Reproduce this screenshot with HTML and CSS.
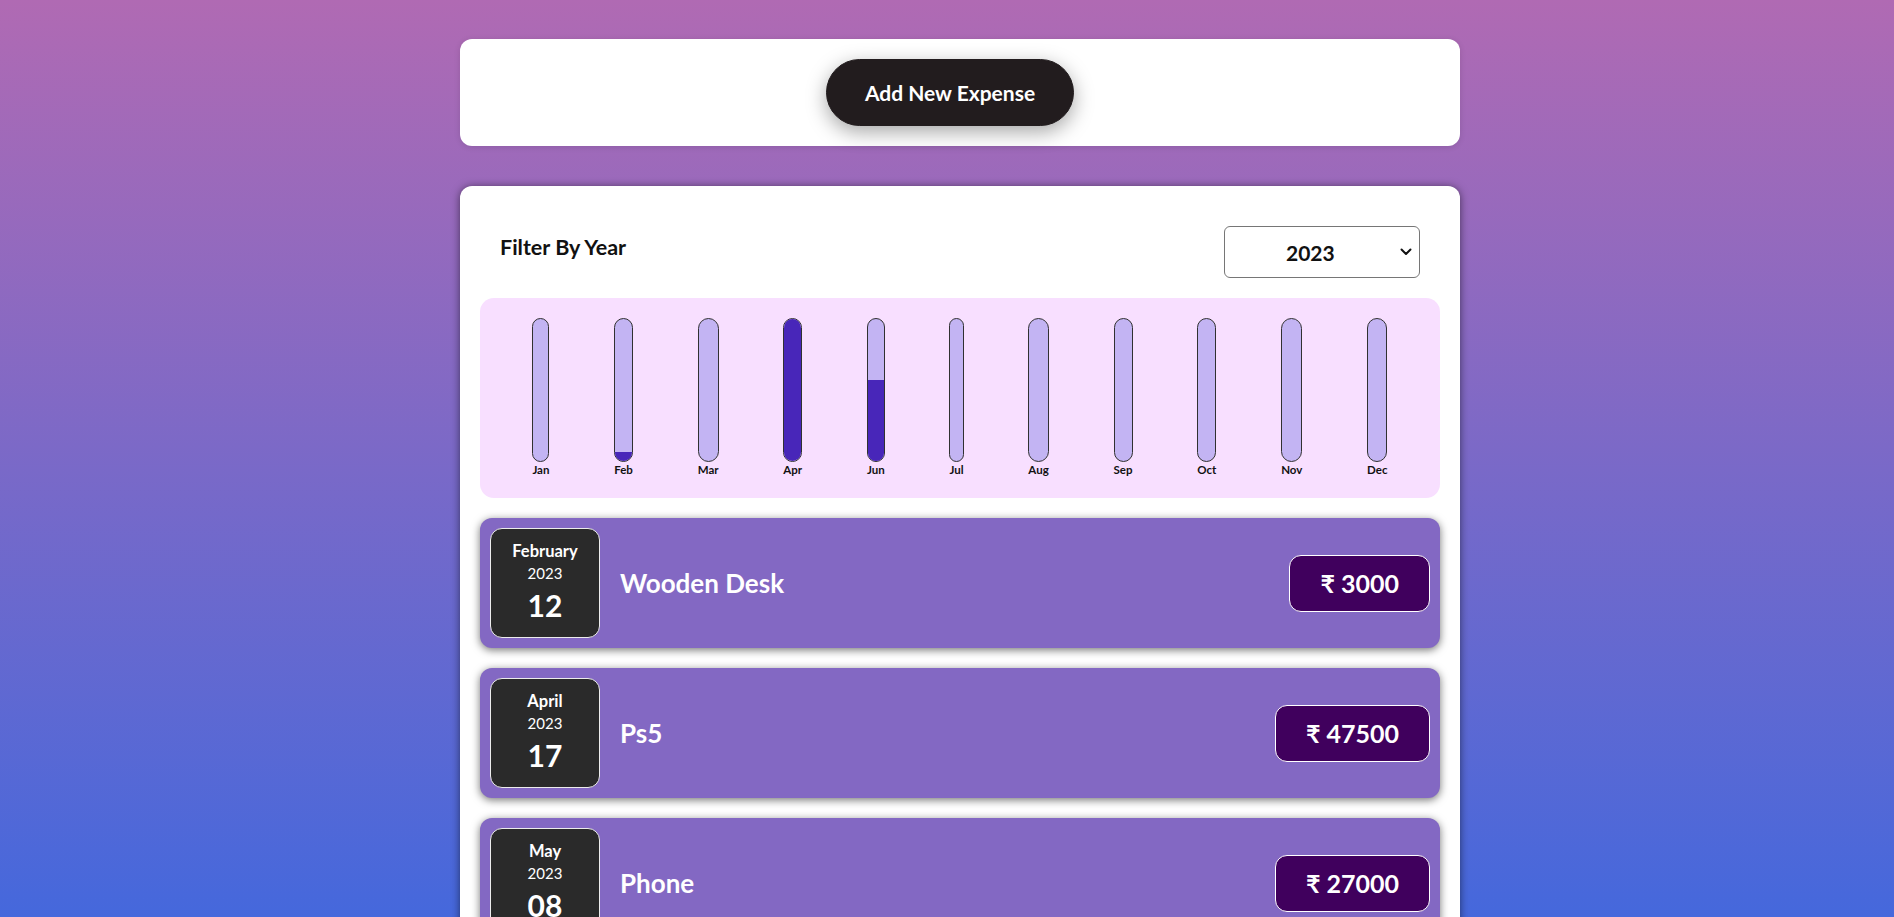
FILE: index.html
```html
<!DOCTYPE html>
<html lang="en">
<head>
<meta charset="utf-8">
<title>Expense Tracker</title>
<link rel="stylesheet" href="styles.css">
</head>
<body>
<div class="app">
  <div class="new-expense">
    <button class="new-expense__btn" type="button">Add New Expense</button>
  </div>

  <div class="expenses">
    <div class="filter">
      <label class="filter__label" for="year">Filter By Year</label>
      <div class="filter__select-wrap">
        <select id="year" class="filter__select">
          <option>2023</option>
          <option>2022</option>
          <option>2021</option>
          <option>2020</option>
        </select>
        <svg class="filter__chevron" viewBox="0 0 12 8" width="12" height="8" aria-hidden="true"><path d="M1.5 1.5 L6 6 L10.5 1.5" fill="none" stroke="#111" stroke-width="2" stroke-linecap="round" stroke-linejoin="round"/></svg>
      </div>
    </div>

    <div class="chart">
      <div class="chart-bar"><div class="chart-bar__inner"><div class="chart-bar__fill" style="height:0%"></div></div><div class="chart-bar__label">Jan</div></div>
      <div class="chart-bar"><div class="chart-bar__inner"><div class="chart-bar__fill" style="height:6.3%"></div></div><div class="chart-bar__label">Feb</div></div>
      <div class="chart-bar"><div class="chart-bar__inner"><div class="chart-bar__fill" style="height:0%"></div></div><div class="chart-bar__label">Mar</div></div>
      <div class="chart-bar"><div class="chart-bar__inner"><div class="chart-bar__fill" style="height:100%"></div></div><div class="chart-bar__label">Apr</div></div>
      <div class="chart-bar"><div class="chart-bar__inner"><div class="chart-bar__fill" style="height:56.8%"></div></div><div class="chart-bar__label">Jun</div></div>
      <div class="chart-bar"><div class="chart-bar__inner"><div class="chart-bar__fill" style="height:0%"></div></div><div class="chart-bar__label">Jul</div></div>
      <div class="chart-bar"><div class="chart-bar__inner"><div class="chart-bar__fill" style="height:0%"></div></div><div class="chart-bar__label">Aug</div></div>
      <div class="chart-bar"><div class="chart-bar__inner"><div class="chart-bar__fill" style="height:0%"></div></div><div class="chart-bar__label">Sep</div></div>
      <div class="chart-bar"><div class="chart-bar__inner"><div class="chart-bar__fill" style="height:0%"></div></div><div class="chart-bar__label">Oct</div></div>
      <div class="chart-bar"><div class="chart-bar__inner"><div class="chart-bar__fill" style="height:0%"></div></div><div class="chart-bar__label">Nov</div></div>
      <div class="chart-bar"><div class="chart-bar__inner"><div class="chart-bar__fill" style="height:0%"></div></div><div class="chart-bar__label">Dec</div></div>
    </div>

    <ul class="expenses-list">
      <li class="expense-item">
        <div class="expense-date">
          <div class="expense-date__month">February</div>
          <div class="expense-date__year">2023</div>
          <div class="expense-date__day">12</div>
        </div>
        <h2 class="expense-item__title">Wooden Desk</h2>
        <div class="expense-item__price">₹ 3000</div>
      </li>
      <li class="expense-item">
        <div class="expense-date">
          <div class="expense-date__month">April</div>
          <div class="expense-date__year">2023</div>
          <div class="expense-date__day">17</div>
        </div>
        <h2 class="expense-item__title">Ps5</h2>
        <div class="expense-item__price">₹ 47500</div>
      </li>
      <li class="expense-item">
        <div class="expense-date">
          <div class="expense-date__month">May</div>
          <div class="expense-date__year">2023</div>
          <div class="expense-date__day">08</div>
        </div>
        <h2 class="expense-item__title">Phone</h2>
        <div class="expense-item__price">₹ 27000</div>
      </li>
    </ul>
  </div>
</div>
</body>
</html>
```

FILE: styles.css
```css
* {
  box-sizing: border-box;
}

html {
  background: linear-gradient(to bottom, #b06ab3, #4568dc) fixed;
  min-height: 100%;
}

body {
  margin: 0;
  padding-left: 26px;
  font-family: Lato, "Noto Sans", sans-serif;
}

.app {
  width: 1000px;
  margin: 0 auto;
  padding: 39px 0 40px;
}

/* ---------- new expense card ---------- */
.new-expense {
  background: #fff;
  border-radius: 12px;
  padding: 20px;
  text-align: center;
  box-shadow: 0 1px 6px rgba(0, 0, 0, 0.12);
}

.new-expense__btn {
  font: inherit;
  font-size: 21px;
  font-weight: 700;
  line-height: 25px;
  color: #fff;
  background: #221c1e;
  border: 1px solid #221c1e;
  border-radius: 34px;
  padding: 20px 0;
  margin-right: 20px;
  width: 248px;
  cursor: pointer;
  box-shadow: 0 6px 20px rgba(0, 0, 0, 0.35);
}

/* ---------- expenses card ---------- */
.expenses {
  margin-top: 40px;
  background: #fff;
  border-radius: 12px;
  padding: 20px;
  box-shadow: 0 1px 8px rgba(0, 0, 0, 0.55);
}

.filter {
  display: flex;
  align-items: center;
  justify-content: space-between;
  margin: 20px 0;
  padding: 0 20px;
}

.filter__label {
  font-size: 21.5px;
  font-weight: 700;
  color: #111;
  margin-bottom: 10px;
}

.filter__select-wrap {
  position: relative;
  width: 196px;
  height: 52px;
}

.filter__select {
  appearance: none;
  -webkit-appearance: none;
  width: 100%;
  height: 100%;
  font: inherit;
  font-size: 21px;
  font-weight: 700;
  color: #111;
  background: #fff;
  border: 1px solid #767676;
  border-radius: 6px;
  padding: 0 0 0 61px;
}

.filter__chevron {
  position: absolute;
  right: 8px;
  top: 22px;
  pointer-events: none;
}

/* ---------- chart ---------- */
.chart {
  display: flex;
  justify-content: space-around;
  height: 200px;
  padding: 20px;
  border-radius: 14px;
  background: #f8dfff;
}

.chart-bar {
  display: flex;
  flex-direction: column;
  align-items: center;
}

.chart-bar__inner {
  width: 100%;
  height: 144px;
  border: 1px solid #313131;
  border-radius: 12px;
  background: #c3b4f3;
  overflow: hidden;
  display: flex;
  flex-direction: column;
  justify-content: flex-end;
}

.chart-bar__fill {
  width: 100%;
  background: #4826b9;
}

.chart-bar__label {
  font-size: 11.5px;
  font-weight: 700;
  line-height: 16px;
  color: #111;
}

/* ---------- list ---------- */
.expenses-list {
  list-style: none;
  margin: 0;
  padding: 0;
}

.expense-item {
  display: flex;
  align-items: center;
  margin-top: 20px;
  padding: 10px;
  border-radius: 12px;
  background: #8368c3;
  box-shadow: 0 2px 8px rgba(0, 0, 0, 0.55);
}

.expense-date {
  flex: none;
  width: 110px;
  height: 110px;
  display: flex;
  flex-direction: column;
  align-items: center;
  justify-content: center;
  border: 1px solid #ececec;
  border-radius: 12px;
  background: #2a2a2a;
  color: #fff;
}

.expense-date__month {
  font-size: 16.5px;
  font-weight: 700;
  line-height: 22px;
}

.expense-date__year {
  font-size: 15px;
  line-height: 22px;
}

.expense-date__day {
  font-size: 30px;
  font-weight: 700;
  line-height: 42px;
}

.expense-item__title {
  flex: 1;
  margin: 0 20px;
  font-size: 26px;
  font-weight: 700;
  color: #fff;
}

.expense-item__price {
  font-size: 25px;
  font-weight: 700;
  line-height: 35px;
  color: #fff;
  background: #40005d;
  border: 1px solid #fff;
  border-radius: 12px;
  padding: 10px 30px;
}
```
